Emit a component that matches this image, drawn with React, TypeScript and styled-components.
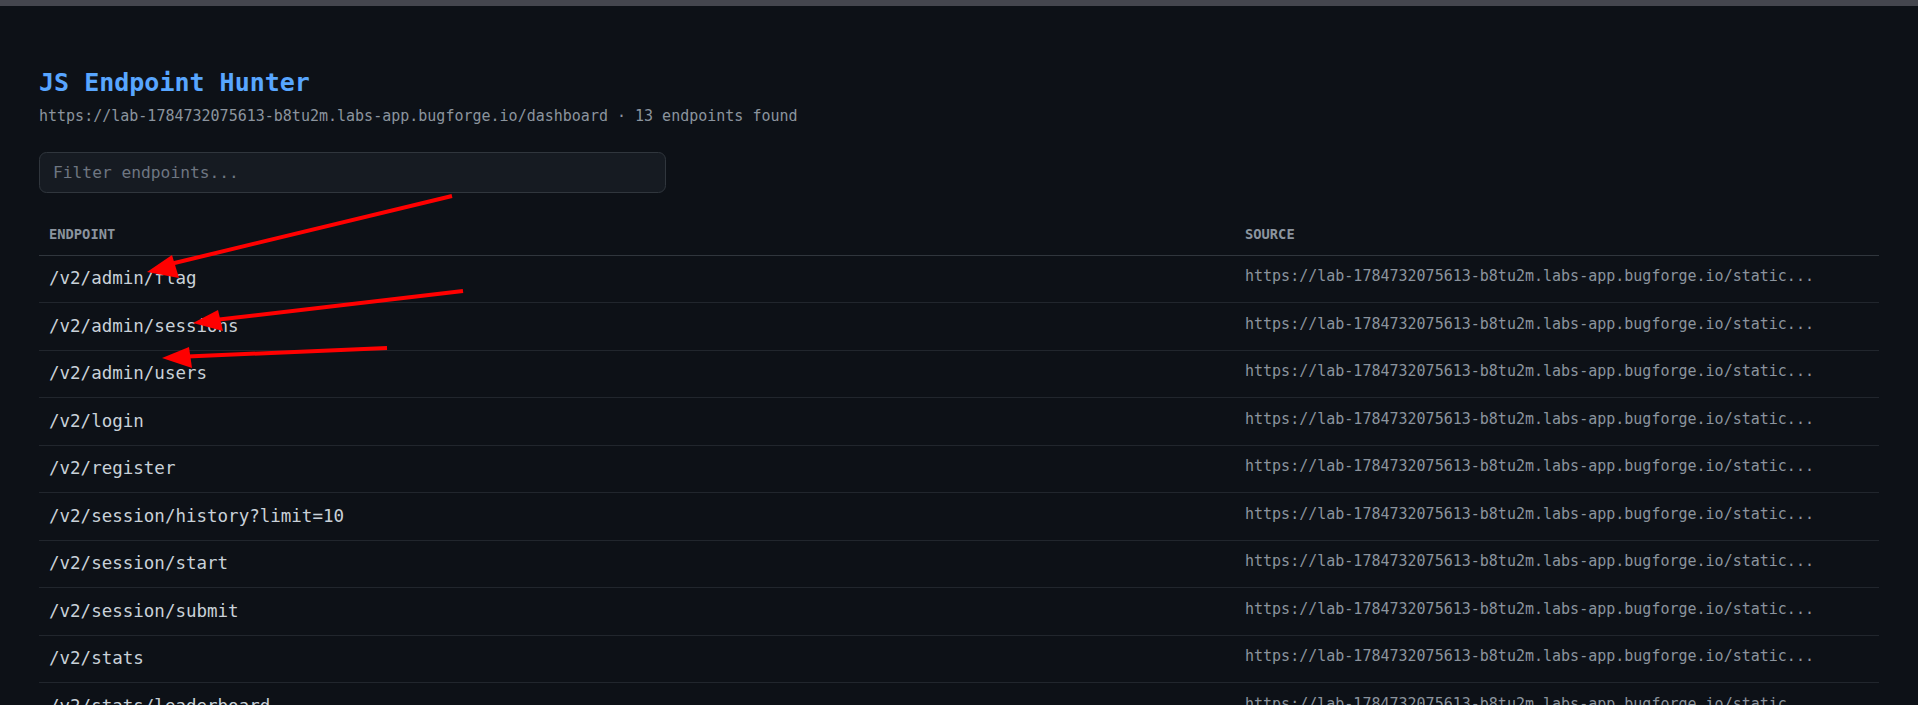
import React, {useState} from 'react';
import styled, {createGlobalStyle} from 'styled-components';

const GlobalStyle = createGlobalStyle`
  html, body {
    margin: 0;
    padding: 0;
    background: #0d1117;
    font-family: "DejaVu Sans Mono", "Liberation Mono", monospace;
  }
`;

const Screen = styled.div`
  position: relative;
  min-height: 100vh;
  background: #0d1117;
`;

const TopBar = styled.div`
  height: 6px;
  background: #44464e;
`;

const Page = styled.main`
  padding: 62px 39px 40px;
`;

const Title = styled.h1`
  margin: 0 0 8.5px;
  font-size: 25px;
  line-height: 30px;
  font-weight: 700;
  color: #58a6ff;
`;

const Subtitle = styled.p`
  margin: 0;
  font-size: 15px;
  line-height: 18px;
  color: #8b949e;
`;

const FilterInput = styled.input`
  display: block;
  box-sizing: border-box;
  margin-top: 27.5px;
  width: 627px;
  height: 41.3px;
  padding: 0 13px;
  background: #161b22;
  border: 1px solid #30363d;
  border-radius: 7.5px;
  color: #c9d1d9;
  font-family: inherit;
  font-size: 16.25px;
  outline: none;

  &::placeholder {
    color: #6e7681;
  }
`;

const Table = styled.table`
  margin-top: 20.7px;
  width: 100%;
  border-collapse: collapse;
  table-layout: fixed;
`;

const Col = styled.col<{ $width: string }>`
  width: ${p => p.$width};
`;

const HeadCell = styled.th`
  box-sizing: border-box;
  padding: 12.5px 10px;
  text-align: left;
  font-size: 13.75px;
  line-height: 16px;
  font-weight: 700;
  text-transform: uppercase;
  color: #8b949e;
  border-bottom: 1px solid #30363d;
`;

const Row = styled.tr`
  border-bottom: 1px solid #21262d;
`;

const EndpointCell = styled.td`
  padding: 12.5px 10px;
  font-size: 17.5px;
  line-height: 21.5px;
  color: #c9d1d9;
  white-space: nowrap;
`;

const SourceCell = styled.td`
  padding: 12.5px 10px;
  vertical-align: top;
  font-size: 15px;
  line-height: 17.5px;
  color: #8b949e;
  white-space: nowrap;
  overflow: hidden;
`;

const Overlay = styled.svg`
  position: absolute;
  top: 0;
  left: 0;
  pointer-events: none;
`;

const SOURCE = 'https://lab-1784732075613-b8tu2m.labs-app.bugforge.io/static...';

const endpoints = [
  '/v2/admin/flag',
  '/v2/admin/sessions',
  '/v2/admin/users',
  '/v2/login',
  '/v2/register',
  '/v2/session/history?limit=10',
  '/v2/session/start',
  '/v2/session/submit',
  '/v2/stats',
  '/v2/stats/leaderboard',
  '/v2/user/me',
  '/v2/user/profile',
  '/v2/verify',
];

// annotation arrows: tail -> tip, plus the two back corners of the head
const arrows = [
  {x1: 452, y1: 196, x2: 162, y2: 266, head: '147,272 172,255 179,278'},
  {x1: 463, y1: 291, x2: 206, y2: 321, head: '193,323 218,310 223,331'},
  {x1: 387, y1: 348, x2: 176, y2: 357, head: '162,358 189,347 192,368'},
];

function App() {
  const [filter, setFilter] = useState('');
  const shown = endpoints.filter(e => e.includes(filter));

  return (
    <Screen>
      <GlobalStyle />
      <TopBar />
      <Page>
        <Title>JS Endpoint Hunter</Title>
        <Subtitle>
          https://lab-1784732075613-b8tu2m.labs-app.bugforge.io/dashboard · {endpoints.length} endpoints found
        </Subtitle>
        <FilterInput
          placeholder="Filter endpoints..."
          value={filter}
          onChange={e => setFilter(e.target.value)}
        />
        <Table>
          <colgroup>
            <Col $width="65%" />
            <Col $width="35%" />
          </colgroup>
          <thead>
            <tr>
              <HeadCell>Endpoint</HeadCell>
              <HeadCell>Source</HeadCell>
            </tr>
          </thead>
          <tbody>
            {shown.map(e => (
              <Row key={e}>
                <EndpointCell>{e}</EndpointCell>
                <SourceCell>{SOURCE}</SourceCell>
              </Row>
            ))}
          </tbody>
        </Table>
      </Page>
      <Overlay width="600" height="420">
        {arrows.map((a, i) => (
          <g key={i}>
            <line x1={a.x1} y1={a.y1} x2={a.x2} y2={a.y2} stroke="#ff0000" strokeWidth="4" />
            <polygon points={a.head} fill="#ff0000" />
          </g>
        ))}
      </Overlay>
    </Screen>
  );
}

export default App;
